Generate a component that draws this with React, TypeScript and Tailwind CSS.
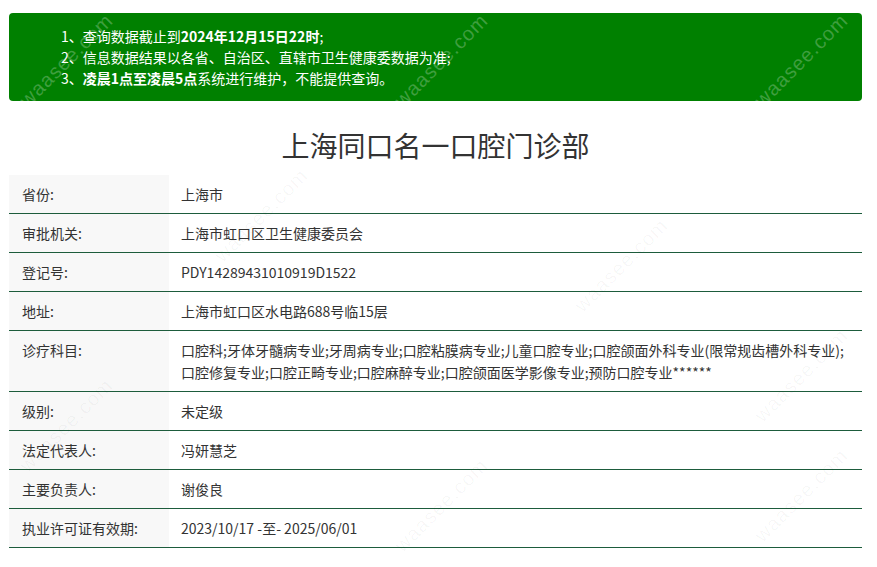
import React from "react";

const rows: [string, React.ReactNode][] = [
  ["省份:", "上海市"],
  ["审批机关:", "上海市虹口区卫生健康委员会"],
  ["登记号:", "PDY14289431010919D1522"],
  ["地址:", "上海市虹口区水电路688号临15层"],
  [
    "诊疗科目:",
    "口腔科;牙体牙髓病专业;牙周病专业;口腔粘膜病专业;儿童口腔专业;口腔颌面外科专业(限常规齿槽外科专业);口腔修复专业;口腔正畸专业;口腔麻醉专业;口腔颌面医学影像专业;预防口腔专业******",
  ],
  ["级别:", "未定级"],
  ["法定代表人:", "冯妍慧芝"],
  ["主要负责人:", "谢俊良"],
  ["执业许可证有效期:", "2023/10/17 -至- 2025/06/01"],
];

const marks: { x: number; y: number; light: boolean }[] = [
  { x: 5, y: 45, light: true },
  { x: 380, y: 45, light: true },
  { x: 740, y: 45, light: true },
  { x: 200, y: 200, light: false },
  { x: 560, y: 250, light: false },
  { x: 740, y: 360, light: false },
  { x: 5, y: 410, light: false },
  { x: 380, y: 490, light: false },
  { x: 740, y: 480, light: false },
];

export default function App() {
  return (
    <div
      className="relative w-[877px] h-[567px] overflow-hidden bg-white text-[#333]"
      style={{ fontFamily: '"Noto Sans CJK SC", "Noto Sans", sans-serif' }}
    >
      <div className="ml-[9px] w-[853px] pt-[13px]">
        <div className="rounded-[4px] bg-[#008000] pl-[52px] pt-[13px] pb-[12px] text-[14px] leading-[21px] text-white">
          <div>
            1、查询数据截止到<b>2024年12月15日22时</b>;
          </div>
          <div>2、信息数据结果以各省、自治区、直辖市卫生健康委数据为准;</div>
          <div>
            3、<b>凌晨1点至凌晨5点</b>系统进行维护，不能提供查询。
          </div>
        </div>
        <h1 className="mt-[24px] mb-[10px] text-center text-[28px] leading-[40px] text-[#333]">
          上海同口名一口腔门诊部
        </h1>
        <div className="flex flex-col">
          {rows.map(([k, v], i) => (
            <div key={i} className="flex border-b border-[#1d5c3c] text-[14px] leading-[22px]">
              <div className="w-[160px] shrink-0 bg-[#f8f8f8] pl-[13px] py-[8px]">{k}</div>
              <div className="flex-1 pl-[12px] pr-[10px] py-[8px]">{v}</div>
            </div>
          ))}
        </div>
      </div>
      {marks.map((m, i) => (
        <div
          key={i}
          className={`pointer-events-none absolute text-[20px] tracking-[1px] ${
            m.light ? "text-white/25" : "text-[#000]/[0.035]"
          }`}
          style={{
            left: m.x,
            top: m.y,
            transform: "rotate(-45deg)",
            fontFamily: '"Liberation Sans", sans-serif',
          }}
        >
          waasee.com
        </div>
      ))}
    </div>
  );
}
